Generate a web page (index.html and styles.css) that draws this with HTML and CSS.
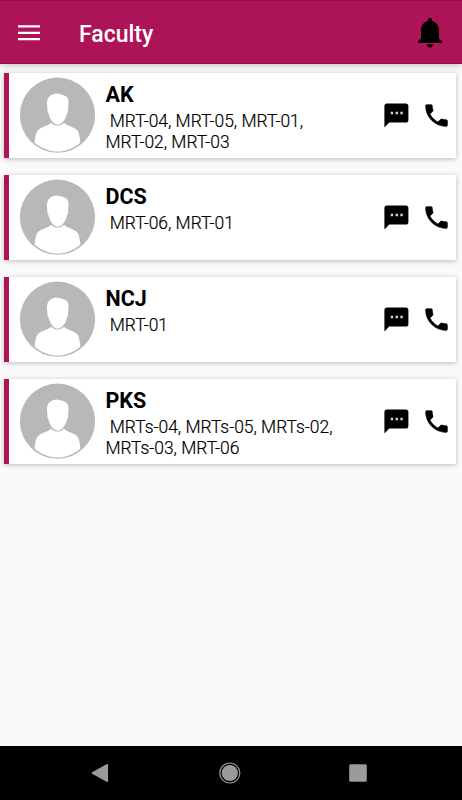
FILE: index.html
```html
<!DOCTYPE html>
<html lang="en">
<head>
<meta charset="utf-8">
<title>Faculty</title>
<link rel="stylesheet" href="styles.css">
</head>
<body>
<svg width="0" height="0" class="defs" aria-hidden="true">
  <symbol id="avatar" viewBox="-0.5 -0.2 76 76">
    <circle cx="38" cy="38" r="37.6" fill="#b8b8b8"/>
    <path fill="#fff" d="M15.200 65.500C15.600 59 16.600 54.500 19 52.300C22 49.700 29 48.500 31.500 45.500C33.500 47.400 35.800 48.400 38 48.400S42.500 47.400 44.500 45.500C47 48.500 54 49.700 57 52.300C59.400 54.500 60.400 59 60.800 65.500C54 71.300 46 74.300 38 74.300S22 71.300 15.200 65.500Z"/>
    <path fill="#fff" d="M28 31.400C26.900 25 27.500 20.400 31 18.200C33.500 16.700 37 15.600 40 16.900C44 17.700 47.500 19 48.600 21.900C49.300 24.400 49 28.400 48.500 31.400C49 33.400 48.400 34.400 47.600 36C46.300 42 42.300 47.400 38.200 47.400S30.300 42 29 36C28 34.400 27.500 33.400 28 31.400Z"/>
  </symbol>
  <symbol id="chat" viewBox="0 0 24 24"><path d="M20 2H4c-1.100 0-2 .9-2 2v18l4-4h14c1.100 0 2-.9 2-2V4c0-1.100-.9-2-2-2z"/><path fill="#d4d4d4" d="M7.300 9h2v2h-2zM11.300 9h2v2h-2zM15.300 9h2v2h-2z"/></symbol>
  <symbol id="phone" viewBox="0 0 24 24"><path stroke="#000" stroke-width=".5" d="M6.620 10.790c1.440 2.830 3.760 5.140 6.590 6.590l2.200-2.200c.27-.27.67-.36 1.020-.24 1.120.37 2.330.57 3.570.57.55 0 1 .45 1 1V20c0 .55-.45 1-1 1C10.610 21 3 13.390 3 4c0-.55.45-1 1-1h3.500c.55 0 1 .45 1 1 0 1.250.2 2.450.57 3.570.11.35.03.74-.25 1.020l-2.200 2.200z"/></symbol>
</svg>
<div class="screen">
  <header class="appbar">
    <svg class="menu" viewBox="0 0 22 16"><path d="M0 1.300h22M0 7.800h22M0 14.200h22" stroke="#fff" stroke-width="2.200"/></svg>
    <h1>Faculty</h1>
    <svg class="bell" viewBox="0 0 26 30"><path d="M13 0C11.700 0 10.900.9 10.900 2.100V2.900C6.700 3.800 4 7.500 4 12V20.500L1 23.200V25H25V23.200L22 20.500V12C22 7.500 19.300 3.800 15.100 2.900V2.100C15.100.9 14.300 0 13 0ZM10 26.200H16C15.800 28.200 14.700 29.500 13 29.500S10.200 28.200 10 26.200Z"/></svg>
  </header>
  <main class="list">
    <article class="card">
      <svg class="avatar"><use href="#avatar"/></svg>
      <div class="info"><h2>AK</h2><p>&nbsp;MRT-04, MRT-05, MRT-01,<br>MRT-02, MRT-03</p></div>
      <svg class="chat"><use href="#chat"/></svg>
      <svg class="phone"><use href="#phone"/></svg>
    </article>
    <article class="card">
      <svg class="avatar"><use href="#avatar"/></svg>
      <div class="info"><h2>DCS</h2><p>&nbsp;MRT-06, MRT-01</p></div>
      <svg class="chat"><use href="#chat"/></svg>
      <svg class="phone"><use href="#phone"/></svg>
    </article>
    <article class="card">
      <svg class="avatar"><use href="#avatar"/></svg>
      <div class="info"><h2>NCJ</h2><p>&nbsp;MRT-01</p></div>
      <svg class="chat"><use href="#chat"/></svg>
      <svg class="phone"><use href="#phone"/></svg>
    </article>
    <article class="card">
      <svg class="avatar"><use href="#avatar"/></svg>
      <div class="info"><h2>PKS</h2><p>&nbsp;MRTs-04, MRTs-05, MRTs-02,<br>MRTs-03, MRT-06</p></div>
      <svg class="chat"><use href="#chat"/></svg>
      <svg class="phone"><use href="#phone"/></svg>
    </article>
  </main>
  <nav class="navbar">
    <svg viewBox="0 0 22 22"><path d="M3.500 11L18.300 2.700V19.300Z" fill="#9b9b9b" stroke="#9b9b9b" stroke-width="1.500" stroke-linejoin="round"/></svg>
    <svg viewBox="0 0 22 22"><circle cx="11.800" cy="11" r="10" fill="none" stroke="#9b9b9b" stroke-width="1.200"/><circle cx="11.800" cy="11" r="8.100" fill="#9b9b9b"/></svg>
    <svg viewBox="0 0 22 22"><rect x="2.200" y="2.200" width="17.600" height="17.600" rx="1.500" fill="#9b9b9b"/></svg>
  </nav>
</div>
</body>
</html>
```
FILE: styles.css
```css
* { box-sizing: border-box; }
body { margin: 0; font-family: Roboto, sans-serif; color: #000; }
h1, h2, p { margin: 0; }
svg { display: block; flex: none; overflow: visible; }
.defs { display: none; }
.screen {
  display: flex;
  flex-direction: column;
  width: 462px;
  height: 800px;
  background: #fafafa;
}
.appbar {
  display: flex;
  align-items: center;
  flex: none;
  height: 64px;
  padding: 2px 19px 0 18px;
  background: #ad1457;
  border-top: 1px solid #8c104d;
  border-bottom: 1px solid #a00a40;
  box-shadow: 0 1px 7px rgba(0, 0, 0, .25);
}
.menu { width: 22px; height: 16px; }
.appbar h1 {
  flex: 1;
  margin-left: 39px;
  padding-top: 3px;
  font-size: 23px;
  line-height: 28px;
  font-weight: 500;
  color: #fff;
}
.bell { width: 26px; height: 30px; }
.list {
  display: flex;
  flex-direction: column;
  flex: 1;
  gap: 17px;
  padding: 9px 6px 0 4px;
}
.card {
  display: flex;
  align-items: flex-start;
  height: 85px;
  border-left: 5px solid #ad1457;
  background: #fff;
  box-shadow: 0 1px 5px rgba(0, 0, 0, .26);
}
.avatar { width: 76px; height: 76px; margin: 4px 0 0 10px; }
.info { flex: 1; margin-left: 10.500px; padding-top: 9px; white-space: nowrap; }
.info h2 { font-size: 21.500px; line-height: 26px; font-weight: 700; }
.info p {
  margin-top: 3px;
  font-size: 17.450px;
  line-height: 20.600px;
  font-weight: 300;
  -webkit-text-stroke: .2px #000;
}
.chat { width: 28.800px; height: 28.800px; margin-top: 28px; }
.phone { width: 29px; height: 29px; margin: 28px 5px 0 10.900px; }
.navbar {
  display: flex;
  align-items: center;
  justify-content: center;
  gap: 107px;
  flex: none;
  height: 54px;
  padding-right: 4px;
  background: #000;
}
.navbar svg { width: 22px; height: 22px; }
```
